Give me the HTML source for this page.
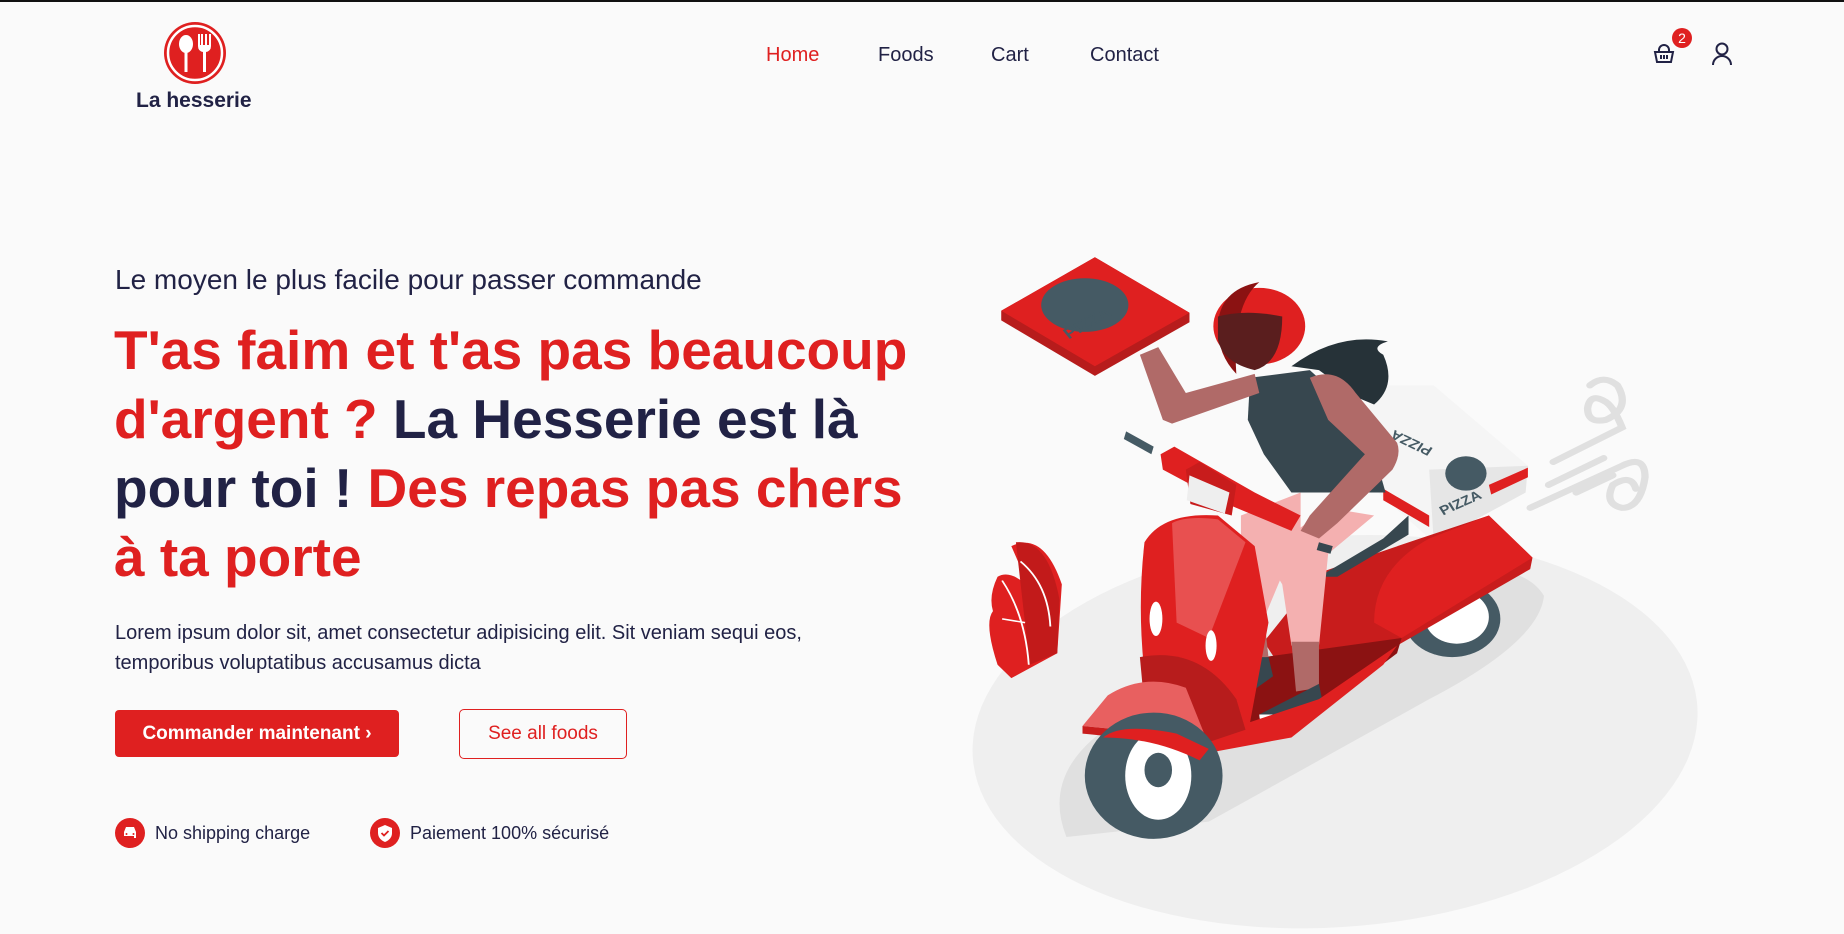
<!DOCTYPE html>
<html><head><meta charset="utf-8">
<style>
*{margin:0;padding:0;box-sizing:border-box}
body{width:1844px;height:934px;background:#fafafa;font-family:"Liberation Sans",sans-serif;position:relative;overflow:hidden;color:#212245}
.topbar{position:absolute;left:0;top:0;width:1844px;height:2px;background:#111}
.abs{position:absolute;white-space:nowrap}
.nav a{position:absolute;top:44px;font-size:20px;color:#212245;text-decoration:none}
h1{position:absolute;left:114px;top:316px;font-size:55px;line-height:69px;font-weight:bold;color:#df2020;width:820px}
h1 span{color:#212245}
.btn1{position:absolute;left:115px;top:710px;width:284px;height:47px;background:#df2020;border-radius:4px;color:#fff;font-weight:bold;font-size:19px;text-align:center;line-height:47px}
.btn2{position:absolute;left:459px;top:709px;width:168px;height:50px;border:1.5px solid #df2020;border-radius:5px;color:#df2020;font-size:19px;text-align:center;line-height:47px}
.feat{position:absolute;top:818px;font-size:18px;color:#212245;line-height:30px;padding-left:40px}
.feat i{position:absolute;left:0;top:0;width:30px;height:30px;border-radius:50%;background:#df2020}
</style></head><body>
<div class="topbar"></div>
<svg class="abs" style="left:162px;top:20px" width="66" height="66" viewBox="0 0 66 66">
<circle cx="33" cy="33" r="31" fill="#df2020"/><circle cx="33" cy="33" r="27" fill="none" stroke="#fff" stroke-width="2.5"/>
<ellipse cx="24" cy="24" rx="7" ry="9" fill="#fff"/><rect x="22.5" y="30" width="3" height="22" fill="#fff"/>
<path d="M36 14v12q0 5 5 6v20h3V32q5-1 5-6V14h-2v11h-2V14h-2v11h-2V14h-2v11h-1V14z" fill="#fff"/>
</svg>
<div class="abs" style="left:136px;top:89px;font-size:21px;font-weight:bold;color:#212245">La hesserie</div>
<div class="nav">
<a style="left:766px;color:#df2020">Home</a><a style="left:878px">Foods</a><a style="left:991px">Cart</a><a style="left:1090px">Contact</a>
</div>
<svg class="abs" style="left:1652px;top:42px" width="24" height="24" viewBox="0 0 24 24" fill="none" stroke="#212245" stroke-width="2">
<path d="M7 10V8a5 5 0 0 1 10 0v2"/><path d="M3 10h18l-2 10H5z"/><path d="M9 13v4M12 13v4M15 13v4"/></svg>
<div class="abs" style="left:1672px;top:28px;width:20px;height:20px;border-radius:50%;background:#df2020;color:#fff;font-size:14px;text-align:center;line-height:20px">2</div>
<svg class="abs" style="left:1710px;top:41px" width="24" height="26" viewBox="0 0 24 26" fill="none" stroke="#212245" stroke-width="2">
<circle cx="12" cy="8" r="5.5"/><path d="M3 24a9 9 0 0 1 18 0"/></svg>

<div class="abs" style="left:115px;top:264px;font-size:28px;color:#212245">Le moyen le plus facile pour passer commande</div>
<h1>T'as faim et t'as pas beaucoup d'argent ? <span>La Hesserie est là pour toi !</span> Des repas pas chers à ta porte</h1>
<div class="abs" style="left:115px;top:618px;font-size:20px;line-height:30px;color:#212245">Lorem ipsum dolor sit, amet consectetur adipisicing elit. Sit veniam sequi eos,<br>temporibus voluptatibus accusamus dicta</div>
<div class="btn1">Commander maintenant ›</div>
<div class="btn2">See all foods</div>
<div class="feat" style="left:115px"><i><svg width="30" height="30" viewBox="0 0 30 30"><path d="M9 14l2-5h8l2 5v6h-2v-2h-10v2H9z" fill="#fff"/><circle cx="11.5" cy="16" r="1" fill="#df2020"/><circle cx="18.5" cy="16" r="1" fill="#df2020"/></svg></i>No shipping charge</div>
<div class="feat" style="left:370px"><i><svg width="30" height="30" viewBox="0 0 30 30"><path d="M15 7l7 3v5q0 6-7 9-7-3-7-9v-5z" fill="#fff"/><path d="M11.5 15l2.5 2.5 4.5-4.5" stroke="#df2020" stroke-width="1.8" fill="none"/></svg></i>Paiement 100% sécurisé</div>

<svg class="abs" style="left:970px;top:240px;overflow:visible" width="720" height="600" viewBox="0 0 1568 1568" preserveAspectRatio="none">
<ellipse cx="795" cy="1285" rx="792" ry="510" fill="#efefef" transform="rotate(-6 795 1285)"/>
<path d="M210 1560 Q150 1380 330 1250 L1000 870 Q1200 830 1250 930 Q1240 1050 1000 1200 L520 1520Z" fill="#e0e0e0"/>
<g fill="none" stroke="#e0e0e0" stroke-width="16" stroke-linecap="round">
<path d="M1270 580L1420 490Q1400 430 1380 420Q1350 400 1345 440Q1345 480 1385 470Q1440 440 1410 380Q1380 350 1350 380"/>
<path d="M1220 700L1420 590Q1470 560 1470 620Q1460 700 1420 700Q1380 690 1400 640Q1440 610 1450 650"/>
<path d="M1260 640L1380 570"/><path d="M1320 660L1400 615"/>
</g>
<path d="M90 800Q160 760 200 900L190 1080L90 1145L60 1110Q30 1000 50 970Q40 930 60 880Q90 860 130 910Z" fill="#df2020"/>
<path d="M100 790Q170 780 195 940L190 1080L130 1110Z" fill="#c21a1a"/>
<path d="M110 840Q170 900 175 1010M70 890Q120 980 128 1110M70 990L120 1000" stroke="#fff" stroke-width="4" fill="none"/>
<ellipse cx="1050" cy="990" rx="105" ry="100" fill="#455a64"/>
<ellipse cx="1060" cy="985" rx="70" ry="70" fill="#fff"/>
<path d="M870 380L1010 380L1215 590L1210 660L1010 790L870 640Z" fill="#f5f5f5"/>
<path d="M1010 790L1000 600L1215 590L1210 660Z" fill="#e6e6e6"/>
<path d="M1130 640L1215 595L1215 620L1135 665Z" fill="#df2020"/>
<path d="M900 650L1000 720L1000 750L900 680Z" fill="#df2020"/>
<circle cx="1080" cy="610" r="45" fill="#455a64"/>
<text x="1030" y="720" font-family="Liberation Sans" font-weight="bold" font-size="34" fill="#455a64" transform="rotate(-28 1030 720)">PIZZA</text>
<text x="880" y="430" font-family="Liberation Sans" font-weight="bold" font-size="34" fill="#455a64" transform="rotate(210 960 470)">PIZZA</text>
<path d="M760 870L980 780L1130 720L1225 830L1220 860L930 1060L700 1160L640 1050Z" fill="#c81c1c"/>
<path d="M880 1000Q880 860 1000 780L1130 720L1225 830L940 1040Z" fill="#df2020"/>
<path d="M760 880L900 780L955 720L955 770L800 880Z" fill="#37474f"/>
<path d="M580 1100L940 1040L930 1080L700 1290L590 1300Z" fill="#8b1212"/>
<path d="M640 820L780 700L880 720L780 820L760 1060L700 1060L680 900Z" fill="#f4b0b0"/>
<path d="M700 1050L760 1050L760 1170L710 1180Z" fill="#b06a68"/>
<path d="M630 1240L760 1160L770 1220L680 1280Q630 1280 630 1240Z" fill="#37474f"/>
<path d="M630 1240L700 1240L680 1280Q630 1280 630 1240Z" fill="#fff"/>
<path d="M590 720L720 660L720 760L640 990L590 990Z" fill="#f4b0b0"/>
<path d="M590 980L640 980L650 1090L590 1100Z" fill="#b06a68"/>
<path d="M580 1090L650 1090L660 1140L590 1200Z" fill="#37474f"/>
<path d="M380 790Q420 710 540 720L620 800L650 1000L610 1260L760 1200L930 1060L900 1110L700 1300L520 1340L390 1220Q360 1000 380 790Z" fill="#df2020"/>
<path d="M370 1090Q500 1060 580 1200L600 1280L500 1320L380 1220Z" fill="#b71c1c"/>
<path d="M440 740Q470 720 540 730L600 790L520 1040L450 1000Z" fill="#e85050"/>
<path d="M245 1270L300 1190Q380 1130 470 1170L520 1320L440 1300L330 1280Z" fill="#e86060"/>
<path d="M245 1270L330 1280L440 1300L520 1330L500 1340Q350 1300 245 1290Z" fill="#c81c1c"/>
<ellipse cx="405" cy="990" rx="14" ry="45" fill="#fff"/>
<ellipse cx="525" cy="1060" rx="12" ry="40" fill="#fff"/>
<ellipse cx="400" cy="1400" rx="150" ry="165" fill="#455a64"/>
<ellipse cx="410" cy="1400" rx="72" ry="115" fill="#fff"/>
<ellipse cx="410" cy="1385" rx="30" ry="45" fill="#455a64"/>
<path d="M290 1300Q330 1260 450 1290L520 1330L500 1360Q400 1300 290 1300Z" fill="#df2020"/>
<path d="M340 500L400 540L395 560L335 520Z" fill="#455a64"/>
<path d="M415 560L445 540L620 660L720 720L700 760L560 690L420 600Z" fill="#df2020"/>
<path d="M470 600L500 580L580 640L570 720L480 690Z" fill="#c81c1c"/>
<path d="M478 615L565 660L555 715L472 680Z" fill="#eeeeee"/>
<path d="M760 790L790 800L785 820L755 810Z" fill="#37474f"/>
<path d="M610 360L740 340L860 470L905 660L700 660L640 560L605 470Z" fill="#37474f"/>
<path d="M700 330Q800 240 910 265Q870 280 900 300Q930 380 880 430L840 410L760 340Z" fill="#263238"/>
<path d="M370 300L410 280L470 400L620 350L630 400L440 480L420 470Z" fill="#b06a68"/>
<path d="M740 360Q800 330 840 400L930 530Q940 560 920 600L800 740L760 780L720 760L740 720L860 560L780 470Z" fill="#b06a68"/>
<circle cx="630" cy="225" r="100" fill="#df2020"/>
<path d="M540 230Q540 130 630 110Q570 170 580 350Q540 300 540 230Z" fill="#8b1212"/>
<path d="M540 200Q600 180 680 200Q680 320 620 340Q550 320 540 260Z" fill="#5a1e1e"/>
<path d="M68 185L272 45L478 190L478 215L272 355L68 210Z" fill="#b71c1c"/>
<path d="M68 185L272 45L478 190L272 330Z" fill="#df2020"/>
<ellipse cx="250" cy="170" rx="95" ry="70" fill="#455a64"/>
<text x="215" y="260" font-family="Liberation Sans" font-weight="bold" font-size="40" fill="#455a64" transform="rotate(-34 215 260)">PIZZA</text>
</svg>
</body></html>
